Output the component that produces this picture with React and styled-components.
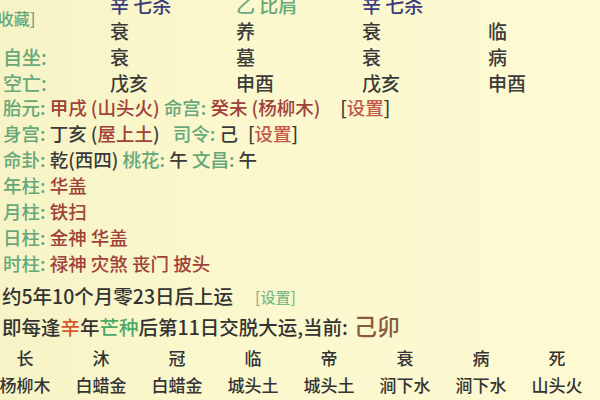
import React from "react";
import styled, { createGlobalStyle } from "styled-components";

const Global = createGlobalStyle`
  html, body { margin: 0; padding: 0; }
  body {
    width: 600px;
    height: 400px;
    overflow: hidden;
    background: linear-gradient(90deg, #f6f4c6 0%, #fbf8cd 40%, #fdf9d2 100%);
    font-family: "Noto Sans CJK SC", "Noto Sans", sans-serif;
    font-weight: 500;
    color: #333;
  }
`;

const Page = styled.div`
  margin-top: -8px;
  height: 408px;
  overflow: hidden;
`;

const Table = styled.div`
  display: grid;
  grid-template-columns: 107px repeat(4, 126px);
  grid-auto-rows: 26px;
  padding-left: 3px;
  font-size: 19px;
  line-height: 26px;
`;

const Label = styled.div`
  color: #67a77a;
  margin-left: ${(p) => p.$shift || 0}px;
  grid-row: ${(p) => (p.$span ? `span ${p.$span}` : "auto")};
  align-self: ${(p) => (p.$span ? "center" : "stretch")};
  font-size: ${(p) => (p.$small ? "16px" : "19px")};
  white-space: nowrap;
`;

const Cell = styled.div`
  color: ${(p) =>
    p.$tone === "blue" ? "#3b3b7c" : p.$tone === "green" ? "#67a77a" : "#3a3a3a"};
  white-space: nowrap;
`;

const Info = styled.div`
  margin-top: -2px;
  padding-left: 3px;
  font-size: 18.5px;
`;

const InfoRow = styled.div`
  height: 26px;
  line-height: 26px;
  white-space: nowrap;
`;

const G = styled.span`
  color: #67a77a;
  margin-left: ${(p) => p.$gap || 0}px;
`;
const R = styled.span`
  color: #a0413a;
`;
const D = styled.span`
  color: #3a3a3a;
`;
const Set = styled.span`
  color: #3a3a3a;
  margin-left: ${(p) => p.$gap || 0}px;
  & > b {
    font-weight: inherit;
    color: #c2584c;
  }
`;

const Luck = styled.div`
  margin-top: 4px;
  padding-left: 2px;
  height: 32px;
  line-height: 32px;
  font-size: 19.5px;
  color: #333;
  white-space: nowrap;
`;

const LuckSet = styled.span`
  font-size: 15px;
  color: #7db88b;
  margin-left: 22px;
  vertical-align: 1px;
`;

const Rule = styled.div`
  padding-left: 2px;
  height: 26px;
  line-height: 26px;
  font-size: 19.5px;
  color: #333;
  white-space: nowrap;
`;

const Orange = styled.span`
  color: #d4582e;
`;
const Green = styled.span`
  color: #4fa866;
`;
const Current = styled.span`
  color: #8a5a3c;
  font-size: 23px;
  margin-left: 6px;
`;

const Phases = styled.div`
  margin-top: 7px;
  margin-left: -13px;
  display: grid;
  grid-template-columns: repeat(8, 76px);
  font-size: 17px;
  color: #333;
  text-align: center;
`;

const PhaseTop = styled.div`
  height: 26px;
  line-height: 26px;
`;
const PhaseBottom = styled.div`
  height: 28px;
  line-height: 28px;
  white-space: nowrap;
`;

const phases = [
  ["长", "杨柳木"],
  ["沐", "白蜡金"],
  ["冠", "白蜡金"],
  ["临", "城头土"],
  ["帝", "城头土"],
  ["衰", "涧下水"],
  ["病", "涧下水"],
  ["死", "山头火"],
];

const Settings = ({ gap }) => (
  <Set $gap={gap}>
    [<b>设置</b>]
  </Set>
);

export default function App() {
  return (
    <>
      <Global />
      <Page>
        <Table>
          <Label $span={2} $shift={-11} $small>
            [收藏]
          </Label>
          <Cell $tone="blue">辛 七杀</Cell>
          <Cell $tone="green">乙 比肩</Cell>
          <Cell $tone="blue">辛 七杀</Cell>
          <Cell />
          <Cell>衰</Cell>
          <Cell>养</Cell>
          <Cell>衰</Cell>
          <Cell>临</Cell>
          <Label>自坐:</Label>
          <Cell>衰</Cell>
          <Cell>墓</Cell>
          <Cell>衰</Cell>
          <Cell>病</Cell>
          <Label>空亡:</Label>
          <Cell>戊亥</Cell>
          <Cell>申酉</Cell>
          <Cell>戊亥</Cell>
          <Cell>申酉</Cell>
        </Table>
        <Info>
          <InfoRow>
            <G>胎元:</G> <R>甲戌 (山头火)</R> <G>命宫:</G> <R>癸未 (杨柳木)</R>
            <Settings gap={20} />
          </InfoRow>
          <InfoRow>
            <G>身宫:</G> <D>丁亥 (</D>
            <R>屋上土</R>
            <D>)</D> <G $gap={9}>司令:</G> <D>己</D>
            <Settings gap={10} />
          </InfoRow>
          <InfoRow>
            <G>命卦:</G> <D>乾(西四)</D> <G>桃花:</G> <D>午</D> <G>文昌:</G> <D>午</D>
          </InfoRow>
          <InfoRow>
            <G>年柱:</G> <R>华盖</R>
          </InfoRow>
          <InfoRow>
            <G>月柱:</G> <R>铁扫</R>
          </InfoRow>
          <InfoRow>
            <G>日柱:</G> <R>金神 华盖</R>
          </InfoRow>
          <InfoRow>
            <G>时柱:</G> <R>禄神 灾煞 丧门 披头</R>
          </InfoRow>
        </Info>
        <Luck>
          约5年10个月零23日后上运<LuckSet>[设置]</LuckSet>
        </Luck>
        <Rule>
          即每逢<Orange>辛</Orange>年<Green>芒种</Green>后第11日交脱大运,当前:
          <Current>己卯</Current>
        </Rule>
        <Phases>
          {phases.map(([a]) => (
            <PhaseTop key={"t" + a}>{a}</PhaseTop>
          ))}
          {phases.map(([a, b], i) => (
            <PhaseBottom key={"b" + i}>{b}</PhaseBottom>
          ))}
        </Phases>
      </Page>
    </>
  );
}
